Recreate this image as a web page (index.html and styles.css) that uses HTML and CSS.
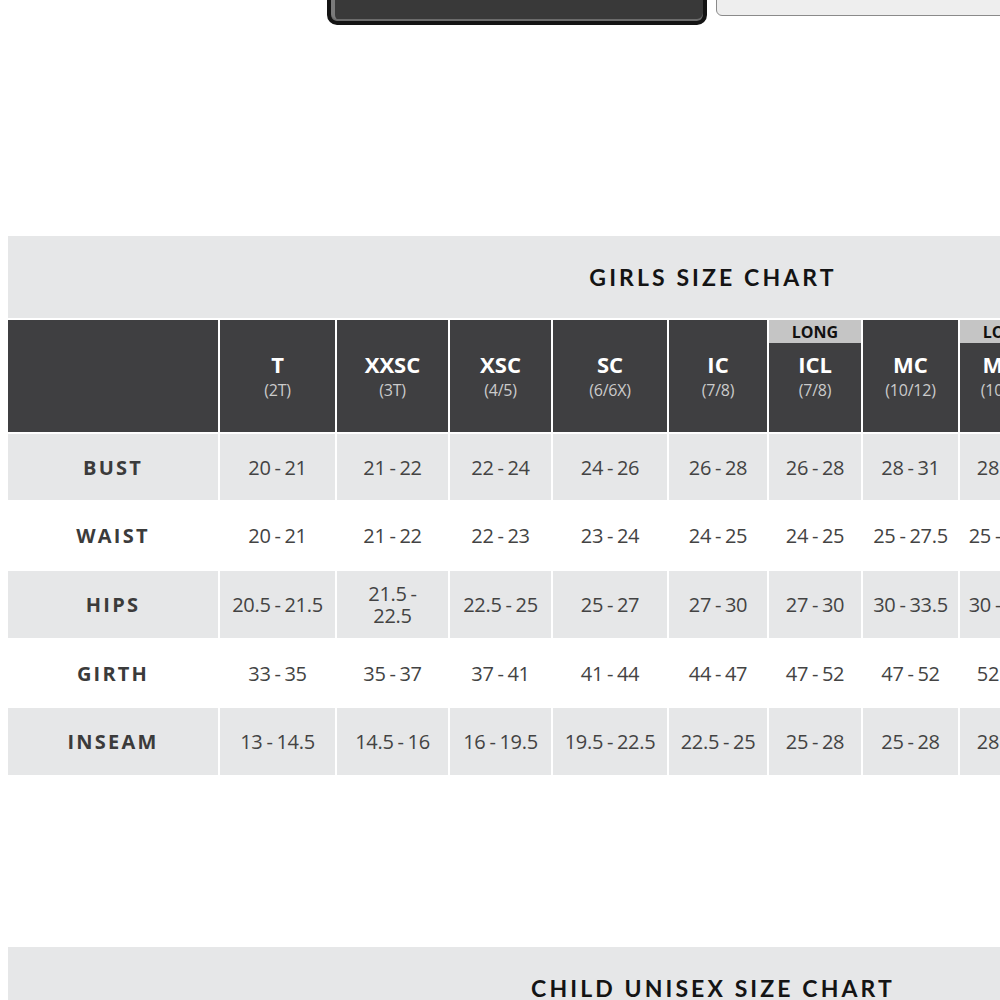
FILE: index.html
```html
<!DOCTYPE html>
<html lang="en">
<head>
<meta charset="utf-8">
<title>Girls Size Chart</title>
<link rel="stylesheet" href="styles.css">
</head>
<body>
<div class="page">
  <div class="topbar">
    <div class="btn btn-dark"></div>
    <div class="btn btn-light"></div>
  </div>

  <section class="chart chart-girls">
    <h2 class="chart-title">GIRLS SIZE CHART</h2>
    <div class="grid">
      <div class="hcell hcell-blank"></div>
      <div class="hcell"><span class="size">T</span><span class="alt">(2T)</span></div>
      <div class="hcell"><span class="size">XXSC</span><span class="alt">(3T)</span></div>
      <div class="hcell"><span class="size">XSC</span><span class="alt">(4/5)</span></div>
      <div class="hcell"><span class="size">SC</span><span class="alt">(6/6X)</span></div>
      <div class="hcell"><span class="size">IC</span><span class="alt">(7/8)</span></div>
      <div class="hcell hcell-long"><span class="long">LONG</span><span class="size">ICL</span><span class="alt">(7/8)</span></div>
      <div class="hcell"><span class="size">MC</span><span class="alt">(10/12)</span></div>
      <div class="hcell hcell-long"><span class="long">LONG</span><span class="size">MCL</span><span class="alt">(10/12)</span></div>
      <div class="hcell"><span class="size">LC</span><span class="alt">(14/16)</span></div>
      <div class="hcell hcell-long"><span class="long">LONG</span><span class="size">LCL</span><span class="alt">(14/16)</span></div>

      <div class="cell label shade">BUST</div>
      <div class="cell shade">20 - 21</div>
      <div class="cell shade">21 - 22</div>
      <div class="cell shade">22 - 24</div>
      <div class="cell shade">24 - 26</div>
      <div class="cell shade">26 - 28</div>
      <div class="cell shade">26 - 28</div>
      <div class="cell shade">28 - 31</div>
      <div class="cell shade">28 - 31</div>
      <div class="cell shade">31 - 34</div>
      <div class="cell shade">31 - 34</div>

      <div class="cell label">WAIST</div>
      <div class="cell">20 - 21</div>
      <div class="cell">21 - 22</div>
      <div class="cell">22 - 23</div>
      <div class="cell">23 - 24</div>
      <div class="cell">24 - 25</div>
      <div class="cell">24 - 25</div>
      <div class="cell">25 - 27.5</div>
      <div class="cell">25 - 27.5</div>
      <div class="cell">27.5 - 30</div>
      <div class="cell">27.5 - 30</div>

      <div class="cell label shade">HIPS</div>
      <div class="cell shade">20.5 - 21.5</div>
      <div class="cell shade wrap"><span class="line">21.5 -</span><span class="line">22.5</span></div>
      <div class="cell shade">22.5 - 25</div>
      <div class="cell shade">25 - 27</div>
      <div class="cell shade">27 - 30</div>
      <div class="cell shade">27 - 30</div>
      <div class="cell shade">30 - 33.5</div>
      <div class="cell shade">30 - 33.5</div>
      <div class="cell shade">33.5 - 37</div>
      <div class="cell shade">33.5 - 37</div>

      <div class="cell label">GIRTH</div>
      <div class="cell">33 - 35</div>
      <div class="cell">35 - 37</div>
      <div class="cell">37 - 41</div>
      <div class="cell">41 - 44</div>
      <div class="cell">44 - 47</div>
      <div class="cell">47 - 52</div>
      <div class="cell">47 - 52</div>
      <div class="cell">52 - 56</div>
      <div class="cell">52 - 56</div>
      <div class="cell">56 - 60</div>

      <div class="cell label shade">INSEAM</div>
      <div class="cell shade">13 - 14.5</div>
      <div class="cell shade">14.5 - 16</div>
      <div class="cell shade">16 - 19.5</div>
      <div class="cell shade">19.5 - 22.5</div>
      <div class="cell shade">22.5 - 25</div>
      <div class="cell shade">25 - 28</div>
      <div class="cell shade">25 - 28</div>
      <div class="cell shade">28 - 30</div>
      <div class="cell shade">28 - 30</div>
      <div class="cell shade">30 - 32</div>
    </div>
  </section>

  <section class="chart chart-unisex">
    <h2 class="chart-title">CHILD UNISEX SIZE CHART</h2>
  </section>
</div>
</body>
</html>
```

FILE: styles.css
```css
html, body {
  margin: 0;
  padding: 0;
  background: #ffffff;
  overflow: hidden;
}

.page {
  width: 1000px;
  height: 1000px;
  overflow: hidden;
  font-family: "Open Sans", "Noto Sans", "Liberation Sans", sans-serif;
}

.topbar {
  display: flex;
  align-items: flex-start;
  gap: 9px;
  padding-left: 327px;
  height: 25px;
}

.btn {
  flex: none;
  box-sizing: border-box;
}

.btn-dark {
  width: 380px;
  height: 60px;
  margin-top: -35px;
  background: #393939;
  border: 4px solid #141414;
  border-radius: 10px;
  box-shadow: inset 0 -2px 0 #6b6b6b, inset 4px 0 0 #7a7a7a;
}

.btn-light {
  width: 400px;
  height: 50px;
  margin-top: -34px;
  background: #eeeeee;
  border: 1px solid #8a8a8a;
  border-radius: 6px;
}

.chart {
  width: 1410px;
  margin-left: 8px;
  background: #ffffff;
}

.chart-girls {
  margin-top: 211px;
}

.chart-unisex {
  margin-top: 172px;
}

.chart-title {
  margin: 0;
  height: 82px;
  display: flex;
  align-items: center;
  justify-content: center;
  background: #e6e7e8;
  font-family: "Lato", "Liberation Sans", sans-serif;
  font-weight: 700;
  font-size: 23px;
  letter-spacing: 3.1px;
  color: #141414;
}

.grid {
  display: grid;
  grid-template-columns: 210px 115px 111px 101px 114px 98px 92px 95px 92px 96px 92px;
  grid-template-rows: 112px 66px 67px 67px 66px 67px;
  column-gap: 2px;
  row-gap: 2px;
  margin-top: 2px;
  background: #ffffff;
}

.hcell {
  position: relative;
  background: #3f3f41;
  display: flex;
  flex-direction: column;
  align-items: center;
  justify-content: center;
  color: #ffffff;
}

.hcell .size {
  font-weight: 700;
  font-size: 22px;
  line-height: 26px;
}

.hcell .alt {
  font-size: 16px;
  line-height: 22px;
  margin-top: 2px;
  color: #cbcbcb;
  letter-spacing: -0.2px;
}

.hcell .long {
  position: absolute;
  top: 0;
  left: 0;
  right: 0;
  height: 23px;
  background: #c5c5c5;
  color: #111111;
  font-weight: 700;
  font-size: 16px;
  line-height: 24px;
  text-align: center;
}

.cell {
  display: flex;
  align-items: center;
  justify-content: center;
  text-align: center;
  font-size: 20px;
  color: #434343;
  white-space: nowrap;
  letter-spacing: -0.3px;
  word-spacing: -1px;
}

.cell.shade {
  background: #e6e7e8;
}

.cell.wrap {
  flex-direction: column;
}

.cell.wrap .line {
  display: block;
  line-height: 22px;
}

.cell.label {
  font-weight: 700;
  font-size: 20px;
  letter-spacing: 2.2px;
  word-spacing: 0;
  color: #3b3b3b;
}
```
